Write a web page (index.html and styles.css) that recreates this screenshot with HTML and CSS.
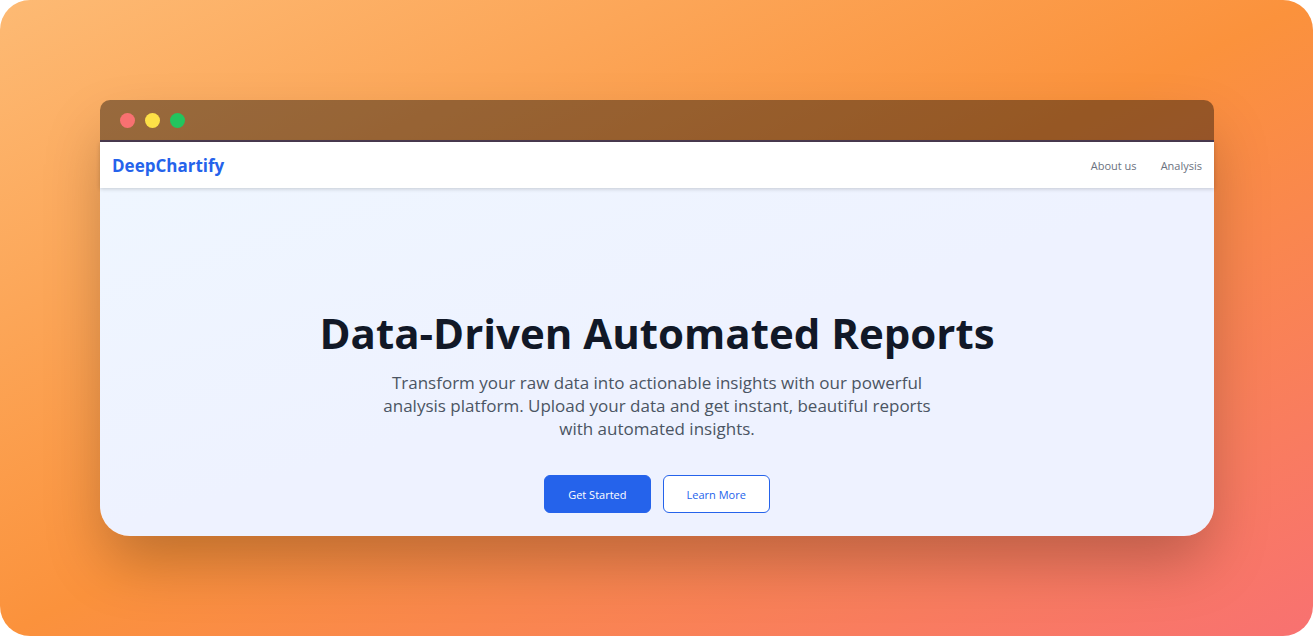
FILE: index.html
```html
<!DOCTYPE html>
<html lang="en">
<head>
<meta charset="utf-8">
<meta name="viewport" content="width=device-width, initial-scale=1">
<title>DeepChartify</title>
<link rel="stylesheet" href="styles.css">
</head>
<body>
<div class="stage">
  <div class="window">
    <div class="titlebar">
      <span class="dot dot-red"></span>
      <span class="dot dot-yellow"></span>
      <span class="dot dot-green"></span>
    </div>
    <header class="navbar">
      <a class="brand" href="#">DeepChartify</a>
      <nav class="links">
        <a href="#about">About us</a>
        <a href="#analysis">Analysis</a>
      </nav>
    </header>
    <main class="hero">
      <h1>Data-Driven Automated Reports</h1>
      <p>Transform your raw data into actionable insights with our powerful analysis platform. Upload your data and get instant, beautiful reports with automated insights.</p>
      <div class="actions">
        <button class="btn btn-primary" type="button">Get Started</button>
        <button class="btn btn-outline" type="button">Learn More</button>
      </div>
    </main>
  </div>
</div>
</body>
</html>
```
FILE: styles.css
```css
* {
  box-sizing: border-box;
}

body {
  margin: 0;
  background: #fff;
  font-family: "Segoe UI", "Open Sans", "Noto Sans", sans-serif;
}

.stage {
  min-height: 100vh;
  padding: 100px 99px 100px 100px;
  display: flex;
  border-radius: 30px;
  background: linear-gradient(to bottom right, #fdba74, #fb923c, #f87171);
}

.window {
  flex: 1;
  display: flex;
  flex-direction: column;
  border-radius: 10px 10px 30px 30px;
  box-shadow: 0 30px 60px -6px rgba(0, 0, 0, 0.25);
}

.titlebar {
  height: 42px;
  padding: 0 20px;
  display: flex;
  align-items: center;
  gap: 10px;
  border-radius: 10px 10px 0 0;
  border-bottom: 2px solid #4a3a50;
  background: rgba(0, 0, 0, 0.4);
}

.dot {
  width: 15px;
  height: 15px;
  border-radius: 50%;
}

.dot-red {
  background: #f87171;
}

.dot-yellow {
  background: #fde047;
}

.dot-green {
  background: #22c55e;
}

.navbar {
  position: relative;
  height: 46px;
  padding: 2px 12px 0;
  display: flex;
  align-items: center;
  justify-content: space-between;
  background: #fff;
  box-shadow: 0 1px 4px rgba(0, 0, 0, 0.18);
}

.brand {
  color: #2563eb;
  font-size: 17px;
  line-height: 24px;
  font-weight: 700;
  text-decoration: none;
}

.links {
  display: flex;
  gap: 24px;
}

.links a {
  color: #6b7280;
  font-size: 11px;
  line-height: 16px;
  text-decoration: none;
}

.hero {
  flex: 1;
  padding: 116px 24px 23px;
  border-radius: 0 0 30px 30px;
  background: linear-gradient(to bottom right, #eff6ff, #eef2ff 50%, #eef2ff);
  text-align: center;
}

.hero h1 {
  margin: 0 0 9px;
  color: #111827;
  font-size: 42px;
  line-height: 58px;
  font-weight: 700;
}

.hero p {
  max-width: 560px;
  margin: 0 auto 35px;
  color: #4b5563;
  font-size: 17px;
  line-height: 23px;
}

.actions {
  display: flex;
  justify-content: center;
  gap: 12px;
}

.btn {
  height: 38px;
  padding: 0 23px;
  border: 1px solid #2563eb;
  border-radius: 6px;
  font-family: inherit;
  font-size: 11px;
}

.btn-primary {
  background: #2563eb;
  color: #fff;
}

.btn-outline {
  background: #fff;
  color: #2563eb;
}
```
